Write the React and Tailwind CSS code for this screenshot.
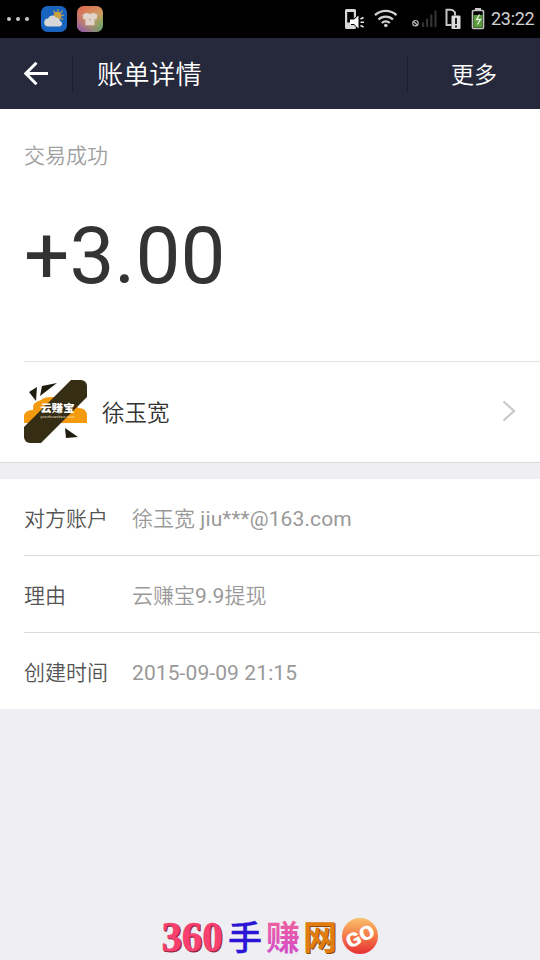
import React from "react";

const details = [
  { label: "对方账户", value: ["徐玉宽", " jiu***@163.com"] },
  { label: "理由", value: ["云赚宝", "9.9", "提现"] },
  { label: "创建时间", value: ["2015-09-09 21:15"] },
];

const isLatin = (text) => /^[\x20-\x7e]+$/.test(text);

function WeatherIcon() {
  return (
    <svg width="26" height="26" viewBox="0 0 26 26">
      <rect width="26" height="26" rx="6.5" fill="#1763bd" />
      <path
        d="M17 3.6v1.6M21.2 5l-1 1.4M12.6 5l1 1.4M22.4 9.2l-1.6.3M21.6 13.4l-1.4-.8"
        stroke="#c9a24a"
        strokeWidth="1.2"
        strokeLinecap="round"
      />
      <circle cx="16.5" cy="9.8" r="4" fill="#c9a040" />
      <path d="M7.500 20.500a4 4 0 0 1-.5-8a4.500 4.500 0 0 1 8-1a4 4 0 0 1 4 3.500a2.800 2.800 0 0 1-.5 5.500z" fill="#d6d6d6" />
    </svg>
  );
}

function ShirtIcon() {
  return (
    <svg width="26" height="26" viewBox="0 0 26 26">
      <defs>
        <linearGradient id="shirtA" x1="0.2" y1="0" x2="0.9" y2="1">
          <stop offset="0" stopColor="#dc6a50" />
          <stop offset="0.5" stopColor="#cf9a60" />
          <stop offset="1" stopColor="#4fa96a" />
        </linearGradient>
        <linearGradient id="shirtB" x1="0.1" y1="1" x2="0.6" y2="0.4">
          <stop offset="0" stopColor="#8a4fb0" />
          <stop offset="1" stopColor="#c58a6a" stopOpacity="0" />
        </linearGradient>
      </defs>
      <rect width="26" height="26" rx="6.5" fill="url(#shirtA)" />
      <rect width="26" height="26" rx="6.5" fill="url(#shirtB)" />
      <path d="M9.500 6.800q3.500 2 7 0l4 2-1 4.500h-2v6h-9v-6h-2l-1-4.500z" fill="#e2d3ca" />
      <circle cx="13" cy="13.500" r="1" fill="#b9a59a" />
    </svg>
  );
}

function StatusBar() {
  return (
    <div className="flex h-[38px] items-center bg-black">
      <div className="flex gap-[5px] pl-[7px]">
        <span className="size-1 rounded-full bg-[#c8c8c8]" />
        <span className="size-1 rounded-full bg-[#c8c8c8]" />
        <span className="size-1 rounded-full bg-[#c8c8c8]" />
      </div>
      <div className="ml-3 flex gap-[10px]">
        <WeatherIcon />
        <ShirtIcon />
      </div>
      <svg className="ml-auto" width="144" height="30" viewBox="0 0 144 30">
        {/* phone with sound */}
        <path d="M4 6.500q0-1.500 1.500-1.500h8q1.500 0 1.500 1.500v6l-5 4v4.500h3l2 2v.5q0 1.500-1.500 1.500h-8q-1.500 0-1.500-1.500z" fill="#d8d8d8" />
        <path d="M6.200 8h6.600v10.500H6.200z" fill="#000" />
        <path d="M9 15.500h4l4.500-4v13l-4.500-4.500h-4z" fill="#fff" />
        <path d="M19.500 15l3-1.500M19.500 18.200h3.500M19.500 21.500l3 1.500" stroke="#e8e8e8" strokeWidth="1.500" />
        {/* wifi */}
        <path
          d="M34 11.200a15.500 15.500 0 0 1 21.500 0M37.500 15.500a10.500 10.500 0 0 1 14.500 0M40.800 19a5.600 5.600 0 0 1 8 0"
          fill="none"
          stroke="#cfcfcf"
          strokeWidth="2.300"
        />
        <circle cx="44.800" cy="21.500" r="1.800" fill="#cfcfcf" />
        {/* signal */}
        <circle cx="74.500" cy="19.200" r="2.700" fill="none" stroke="#bbb" strokeWidth="1.200" />
        <path d="M72.700 17.500l3.600 3.500" stroke="#bbb" strokeWidth="1.200" />
        <path d="M81 18.500h2.200V23H81zM85 14.500h2.200V23H85zM89.200 10.500h2.200V23h-2.200zM93.400 6.500h2.200V23h-2.200z" fill="#333" />
        {/* sim card */}
        <path d="M114 11.500V8.500q-2-2.800-4-2.800h-4.500V21h5" fill="none" stroke="#c4c4c4" strokeWidth="2" />
        <rect x="110.500" y="11.500" width="9" height="13.500" rx="1" fill="#ddd" />
        <path d="M115 14v6M115 21.500v2" stroke="#222" strokeWidth="2" />
        {/* battery */}
        <path d="M134 4h6v2.500h-6z" fill="#ccc" />
        <rect x="131.500" y="6.500" width="11" height="18" rx="1" fill="none" stroke="#c4c4c4" strokeWidth="1.600" />
        <rect x="132.500" y="11" width="9" height="12.500" fill="#589a3c" />
        <path d="M138.500 10.500l-3 5h4l-3 5" fill="none" stroke="#e8f4e0" strokeWidth="1.300" />
      </svg>
      <span className="w-[55px] pl-[6px] text-[18px] leading-none tracking-[-0.3px] text-[#d2d2d2]">23:22</span>
    </div>
  );
}

function TitleBar() {
  return (
    <header className="flex h-[71px] items-center bg-[#26293c] text-white">
      <div className="flex w-[72px] justify-center">
        <svg width="26" height="26" viewBox="0 0 26 26" fill="none" stroke="#fff" strokeWidth="3">
          <path d="M25 12.500H3M13.500 1.800L2.800 12.500l10.700 10.700" />
        </svg>
      </div>
      <div className="h-[37px] w-px bg-[#1b1d2c]" />
      <h1 className="flex-1 pt-[3px] pl-6 text-[26.200px] leading-none font-[350]">账单详情</h1>
      <div className="h-[37px] w-px bg-[#1b1d2c]" />
      <button className="w-[132px] pt-[3px] text-[23px] leading-none font-[350]">更多</button>
    </header>
  );
}

function Avatar() {
  return (
    <svg className="mb-[2px]" width="63" height="63" viewBox="0 0 63 63">
      <defs>
        <clipPath id="avatarClip">
          <rect width="63" height="63" rx="6" />
        </clipPath>
      </defs>
      <g clipPath="url(#avatarClip)">
        <rect width="63" height="63" fill="#fff" />
        <path d="M0 43v-8q2-5 9-5q-1-8 8-10q3-3 10-3l15 1q10 0 12 10q9 0 9 8v7z" fill="#f39a0e" />
        <path d="M0 47L47 0h16v17L17 63H0z" fill="#352d14" />
        <path d="M5 12l8-5-1 14zM18 6l15-3-17 13z" fill="#1f1c10" />
        <path d="M41 48l13 9-12 1z" fill="#1f1c10" />
      </g>
      <text x="16.500" y="32" fontSize="10.500" fontWeight="900" fill="#fff" textLength="34" lengthAdjust="spacingAndGlyphs">云赚宝</text>
      <text x="16.500" y="38" fontSize="3.500" fill="#f3e6c8" textLength="34">yunzhuanbao.com</text>
    </svg>
  );
}

function Watermark() {
  return (
    <svg width="240" height="50" viewBox="150 910 240 50">
      <defs>
        <linearGradient id="goFill" x1="0" y1="0" x2="0" y2="1">
          <stop offset="0" stopColor="#fbc06c" />
          <stop offset="0.5" stopColor="#f57a48" />
          <stop offset="1" stopColor="#e62f35" />
        </linearGradient>
        <linearGradient id="zhuanFill" x1="0" y1="0" x2="0" y2="1">
          <stop offset="0" stopColor="#f0609c" />
          <stop offset="1" stopColor="#d04ccc" />
        </linearGradient>
      </defs>
      <g fontFamily="'Liberation Serif', 'Noto Sans CJK SC', serif" fontWeight="bold">
        <text x="162.500" y="951.500" fontSize="42" textLength="61" lengthAdjust="spacingAndGlyphs" fill="#8d1f3f" stroke="#8d1f3f" strokeWidth="0.800">360</text>
        <text x="161.500" y="950.500" fontSize="42" textLength="61" lengthAdjust="spacingAndGlyphs" fill="#f9406f" stroke="#f9406f" strokeWidth="0.500">360</text>
        <text x="228" y="949.500" fontSize="34" fontWeight="500" fill="#2b14d6" stroke="#2b14d6" strokeWidth="0.400">手</text>
        <text x="266" y="949.500" fontSize="34" fill="url(#zhuanFill)">赚</text>
        <text x="304" y="951" fontSize="34" fill="#8a4a08">网</text>
        <text x="303" y="950" fontSize="34" fill="#e07c10">网</text>
      </g>
      <circle cx="360" cy="936" r="18" fill="url(#goFill)" />
      <text
        x="345"
        y="943"
        fontSize="19"
        fontWeight="900"
        fill="#fff"
        textLength="30"
        lengthAdjust="spacingAndGlyphs"
        transform="rotate(-27 360 936)"
      >
        GO
      </text>
    </svg>
  );
}

export default function App() {
  return (
    <div className="flex h-[960px] w-[540px] flex-col overflow-hidden bg-[#eeeef3] font-['Roboto','Noto_Sans_CJK_SC',sans-serif]">
      <StatusBar />
      <TitleBar />

      <section className="border-b border-[#d9d9dc] bg-white pl-6">
        <div className="h-[253px] border-b border-[#e4e4e4] pt-[35px]">
          <p className="text-[21px] leading-6 font-[350] text-[#a0a0a0]">交易成功</p>
          <p className="mt-11 text-[80px] leading-[88px] text-[#333]">+3.00</p>
        </div>
        <div className="flex h-[100px] items-center">
          <Avatar />
          <span className="ml-[15px] pt-[2px] text-[22.500px] leading-none font-[350] text-[#333]">徐玉宽</span>
          <svg className="mr-6 mb-[2px] ml-auto" width="14" height="22" viewBox="0 0 14 22" fill="none" stroke="#c8c8c8" strokeWidth="2.200">
            <path d="M1.500 1.500L12 11 1.500 20.500" />
          </svg>
        </div>
      </section>

      <section className="mt-4 bg-white pl-6">
        {details.map((item) => (
          <div
            key={item.label}
            className="flex h-[77px] items-center border-b border-[#dcdcdc] pt-[4px] text-[21px] leading-none font-[350] last:h-[76px] last:border-b-0"
          >
            <span className="w-[108px] text-[#555]">{item.label}</span>
            <span className="whitespace-pre text-[#999]">
              {item.value.map((part) => (
                <span key={part} className={isLatin(part) ? "font-normal tracking-[0.1px]" : ""}>
                  {part}
                </span>
              ))}
            </span>
          </div>
        ))}
      </section>

      <div className="mt-auto flex justify-center">
        <Watermark />
      </div>
    </div>
  );
}
